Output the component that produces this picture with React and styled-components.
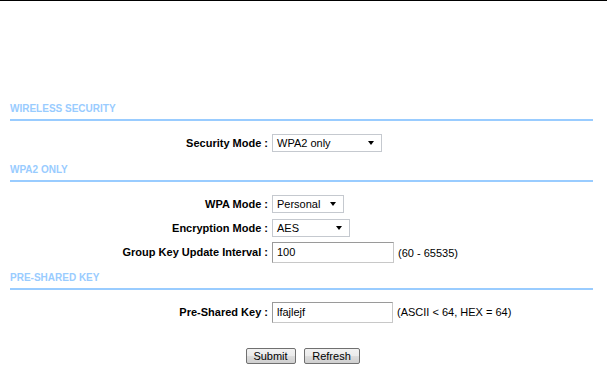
import React from 'react';
import styled, { createGlobalStyle } from 'styled-components';

const GlobalStyle = createGlobalStyle`
    html, body {
        margin: 0;
        padding: 0;
        background: #fff;
    }
    body {
        font-family: Tahoma, "Liberation Sans", Arial, sans-serif;
        font-size: 11px;
        color: #000;
    }
`;

const Page = styled.div`
    width: 607px;
    height: 372px;
    border-top: 1px solid #000;
    box-sizing: border-box;
    padding-top: 100px;
`;

const Form = styled.div`
    margin-left: 10px;
    width: 583px;
`;

const SectionTitle = styled.div`
    font-weight: bold;
    font-size: 10px;
    line-height: 14px;
    color: #99ccff;
    padding-top: 1px;
    padding-bottom: 3px;
    border-bottom: 2px solid #99ccff;
    margin-top: ${(p) => p.$top || 0}px;
`;

const Rows = styled.div`
    display: grid;
    grid-template-columns: 258px 1fr;
    column-gap: 4px;
    padding-top: ${(p) => p.$top || 0}px;
`;

const Label = styled.div`
    font-weight: bold;
    text-align: right;
    white-space: nowrap;
    height: ${(p) => p.$h || 24}px;
    line-height: ${(p) => p.$h || 24}px;
`;

const Cell = styled.div`
    display: flex;
    align-items: center;
    gap: 4px;
    height: ${(p) => p.$h || 24}px;
    white-space: nowrap;
`;

const Select = styled.div`
    display: flex;
    align-items: center;
    justify-content: space-between;
    box-sizing: border-box;
    width: ${(p) => p.$w}px;
    height: 18px;
    border: 1px solid #c5c9cf;
    background: #fff;
    padding: 0 7px 0 4px;
    font-size: 11px;
`;

const Arrow = styled.span`
    width: 0;
    height: 0;
    border-left: 3px solid transparent;
    border-right: 3px solid transparent;
    border-top: 4px solid #000;
`;

const TextBox = styled.div`
    box-sizing: border-box;
    width: ${(p) => p.$w}px;
    height: 21px;
    border: 1px solid #9a9a9a;
    border-right-color: #c8c8c8;
    border-bottom-color: #c8c8c8;
    padding: 0 4px;
    line-height: 19px;
    font-size: 11px;
    background: #fff;
`;

const Hint = styled.span`
    color: #000;
`;

const Buttons = styled.div`
    display: flex;
    justify-content: center;
    gap: 8px;
    margin-top: 24px;
    padding-left: 2px;
`;

const Button = styled.button`
    font-family: inherit;
    font-size: 11px;
    height: 16px;
    padding: 0;
    width: ${(p) => p.$w}px;
    line-height: 14px;
    color: #000;
    border: 1px solid #707070;
    border-radius: 2px;
    background: linear-gradient(#f2f2f2, #ebebeb 50%, #dddddd 51%, #cfcfcf);
`;

function SelectBox({ width, value }) {
    return (
        <Select $w={width}>
            <span>{value}</span>
            <Arrow />
        </Select>
    );
}

export default function App() {
    return (
        <>
            <GlobalStyle />
            <Page>
                <Form>
                    <SectionTitle>WIRELESS SECURITY</SectionTitle>
                    <Rows $top={10}>
                        <Label>Security Mode :</Label>
                        <Cell>
                            <SelectBox width={110} value="WPA2 only" />
                        </Cell>
                    </Rows>

                    <SectionTitle $top={7}>WPA2 ONLY</SectionTitle>
                    <Rows $top={10}>
                        <Label>WPA Mode :</Label>
                        <Cell>
                            <SelectBox width={72} value="Personal" />
                        </Cell>
                        <Label>Encryption Mode :</Label>
                        <Cell>
                            <SelectBox width={78} value="AES" />
                        </Cell>
                        <Label $h={25}>Group Key Update Interval :</Label>
                        <Cell $h={25}>
                            <TextBox $w={122}>100</TextBox>
                            <Hint>(60 - 65535)</Hint>
                        </Cell>
                    </Rows>

                    <SectionTitle $top={5}>PRE-SHARED KEY</SectionTitle>
                    <Rows $top={10}>
                        <Label>Pre-Shared Key :</Label>
                        <Cell>
                            <TextBox $w={121}>lfajlejf</TextBox>
                            <Hint>(ASCII &lt; 64, HEX = 64)</Hint>
                        </Cell>
                    </Rows>

                    <Buttons>
                        <Button $w={50}>Submit</Button>
                        <Button $w={56}>Refresh</Button>
                    </Buttons>
                </Form>
            </Page>
        </>
    );
}
